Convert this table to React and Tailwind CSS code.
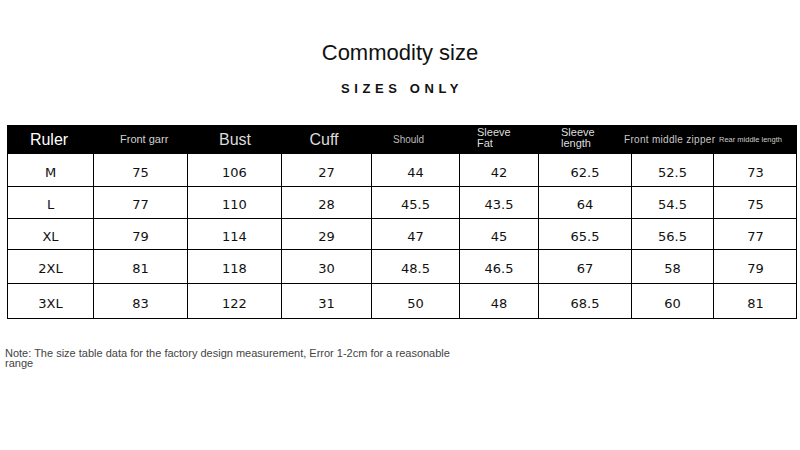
import React from "react";

const cols = "grid grid-cols-[85px_94px_94px_90px_88px_79px_93px_82px_84px]";

const rows = [
  ["M", "75", "106", "27", "44", "42", "62.5", "52.5", "73"],
  ["L", "77", "110", "28", "45.5", "43.5", "64", "54.5", "75"],
  ["XL", "79", "114", "29", "47", "45", "65.5", "56.5", "77"],
  ["2XL", "81", "118", "30", "48.5", "46.5", "67", "58", "79"],
  ["3XL", "83", "122", "31", "50", "48", "68.5", "60", "81"],
];

const rowHeights = ["h-[33px]", "h-[32px]", "h-[31px]", "h-[34px]", "h-[35px]"];

export default function App() {
  return (
    <div className="w-[800px] h-[450px] bg-white overflow-hidden font-['Liberation_Sans',sans-serif]">
      <div className="pt-[40px] text-center text-[22px] leading-[26px] text-[#111]">Commodity size</div>
      <div className="mt-[15px] text-center text-[13px] leading-[16px] font-bold tracking-[4.6px] text-[#111] pl-[4px]">
        SIZES ONLY
      </div>

      <div className="ml-[7px] mt-[28px] w-[790px] border border-black">
        {/* header */}
        <div className={`${cols} h-[27px] bg-black items-center`}>
          <div className="text-center text-[16px] text-white -ml-[3px]">Ruler</div>
          <div className="text-[11px] text-[#d0d0d0] pl-[27px] overflow-hidden whitespace-nowrap">Front garr</div>
          <div className="text-center text-[16px] text-[#dcdcdc] pl-[2px]">Bust</div>
          <div className="text-center text-[16px] text-[#dcdcdc] pr-[4px]">Cuff</div>
          <div className="text-[10px] text-[#bbb] pl-[22px] overflow-hidden whitespace-nowrap">Should</div>
          <div className="text-[11px] leading-[11px] text-[#ddd] pl-[18px] -mt-[3px]">Sleeve<br />Fat</div>
          <div className="text-[11px] leading-[11px] text-[#ddd] pl-[23px] -mt-[3px]">Sleeve<br />length</div>
          <div className="text-[10px] text-[#c8c8c8] -ml-[7px] whitespace-nowrap tracking-[0.3px]">Front middle zipper</div>
          <div className="text-[7.5px] text-[#ccc] pl-[6px] whitespace-nowrap">Rear middle length</div>
        </div>

        {rows.map((r, i) => (
          <div key={i} className={`${cols} ${rowHeights[i]} border-t border-black`}>
            {r.map((c, j) => (
              <div
                key={j}
                className={`flex items-center justify-center pt-[5px] text-[13px] text-[#111] font-['DejaVu_Sans',sans-serif] ${
                  j > 0 ? "border-l border-black" : ""
                }`}
              >
                {c}
              </div>
            ))}
          </div>
        ))}
      </div>

      <div className="mt-[29px] ml-[5px] w-[455px] text-[11px] leading-[10px] text-[#444]">
        Note: The size table data for the factory design measurement, Error 1-2cm for a reasonable range
      </div>
    </div>
  );
}
